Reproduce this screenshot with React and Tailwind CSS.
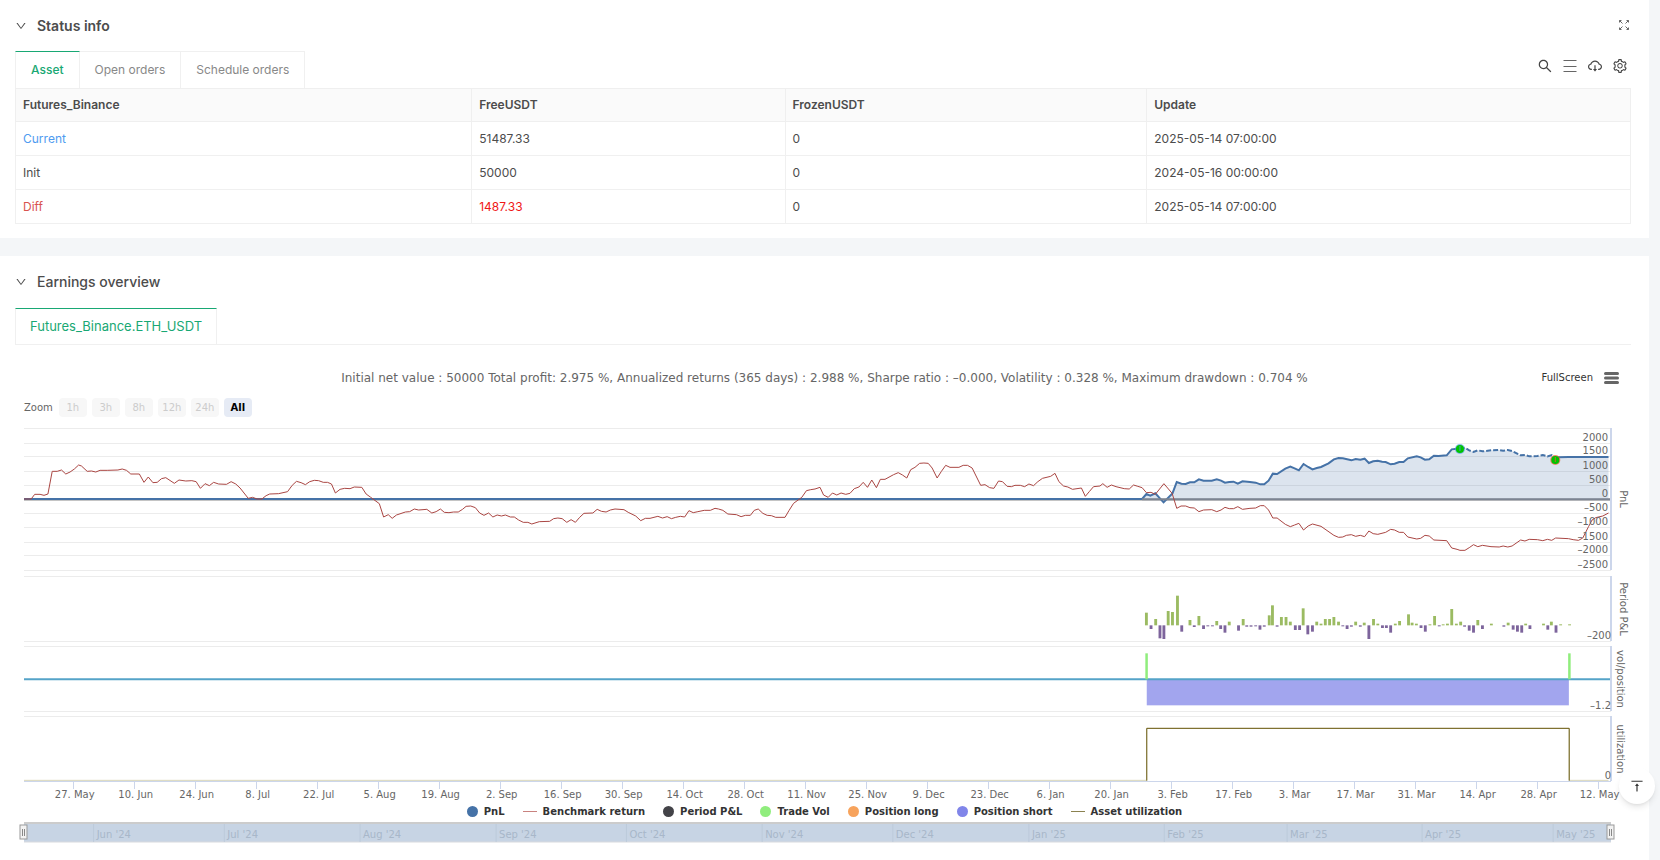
import { useState } from 'react';
import { AiOutlineCloudDownload, AiOutlineDown, AiOutlineSearch, AiOutlineSetting, AiOutlineVerticalAlignTop } from 'react-icons/ai';

// Plot units: the time axis is 4444 units wide, 3 units make one vertical pixel
const PLOT_LEFT = 67;
const PLOT_TOP = 30;
const PLOT_WIDTH = 4444;
const PLOT_HEIGHT = 1140;

const xPct = (v) => `${((v - PLOT_LEFT) / PLOT_WIDTH) * 100}%`;
const yPx = (v) => Math.round((v - PLOT_TOP) / 3);

const shift = (points, dx) => points.trim().split(/\s+/).map((p) => {
    const [x, y] = p.split(',').map(Number);
    return `${x + dx},${y}`;
}).join(' ');

const benchmark = [
    shift(`67,267 87,267 97,253 112,253 123,256 134,252 146,184 160,184 172,180 184,192 196,186 208,177 220,165 228,168 244,184 256,183 268,186 280,181
    300,181 330,180 342,177 354,181 366,192 390,192 403,217 415,201 428,218 440,217 452,206 464,203 488,220 501,210 520,213 537,212 549,215 561,235
    574,221 586,227 598,217 612,222 634,223 647,215 660,222 672,234 695,265 707,262 720,267 733,267 745,257 755,252 780,251 805,245 818,226 830,214
    843,218 855,224 867,215 880,211 892,212 905,217 917,217 928,222 939,249 952,238 965,235 980,236 992,231 1013,232 1025,252 1038,262 1062,281
    1074,321 1087,314 1098,325 1110,315 1135,306 1147,305 1160,297 1172,300 1195,298 1209,309 1221,305 1233,297 1244,307 1257,308 1270,306 1283,306
    1295,298 1305,289 1318,288 1331,293 1343,309 1355,316 1368,309 1380,321 1392,315 1404,318 1415,315 1429,321 1440,321 1452,330 1465,337 1478,337
    1489,342 1510,335`, 0),
    shift(`27,334 38,326 50,324 62,326 75,337 87,329 99,337 111,322 123,310 148,309 160,298 172,304 185,306 197,300 210,297 235,299 247,307 268,318
    282,332 295,325 308,325 330,319 343,324 356,320 368,326 380,322 393,319 405,321 417,302 429,308 442,305 460,301 477,301 490,295 500,297 512,301
    526,312 550,314 563,320 575,316 589,316 600,301 611,297 624,310 636,316 648,317 660,322 686,322 697,302 710,280 733,262 746,242 758,239 770,237
    784,232 794,255 807,262 819,249 831,255 843,249 856,253 868,250 880,236 893,231 905,217 917,232 929,210 942,233 953,208 966,208 990,194 1003,188
    1015,195 1027,204 1038,179 1050,172 1063,160 1075,159 1087,160 1098,174 1112,204 1124,184 1136,166 1148,172 1173,172 1185,166 1197,166 1210,174
    1234,226 1246,224 1259,233 1271,235 1284,213 1295,215 1308,229 1320,230 1330,226 1345,226 1357,230 1369,222 1382,227 1394,215 1407,205 1430,199
    1442,190 1453,215 1466,228 1478,231 1491,238 1516,234 1527,259 1538,245 1550,230`, 1512),
    shift(`0,228 8,221 20,232 32,225 45,230 68,236 82,237 94,225 106,229 118,233 130,248 143,247 155,253 179,221 202,250 215,295 227,288 240,288
    252,293 264,294 277,305 290,300 313,299 327,305 339,300 350,292 362,296 374,296 386,290 399,298 420,295 436,294 449,287 460,287 472,300 484,324
    496,324 519,343 533,350 545,345 557,340 570,360 583,348 595,342 619,349 655,376 668,382 680,381 690,376 704,374 716,379 729,376 741,380 753,363
    765,371 778,373 800,367 814,358 825,360 838,367 850,367 862,381 887,387 898,385 910,376 922,378 935,390 971,392 985,414 1000,418 1008,421
    1022,421 1034,413 1046,404 1058,410 1071,406 1095,410 1118,411 1129,408 1142,411 1154,408 1178,390 1190,393 1202,388 1225,389 1240,392 1253,388
    1265,391 1276,384 1312,386 1325,389 1340,391 1352,384 1368,350 1378,330 1388,323 1408,318 1424,309`, 3080),
].join(' ');

const pnlRise = '67,267 ' + shift(`118,267 130,252 141,257 155,250 166,263 178,277 203,250 215,216 228,221 240,222 252,217 264,217 277,208 290,212
    313,212 327,208 339,212 350,218 362,216 374,215 386,221 399,214 420,216 436,218 449,223 460,223 472,212 484,191 496,192 519,176 533,170 545,175
    557,181 570,162 583,171 595,178 607,174 619,171 640,160 655,148 668,144 680,145 704,151 716,147 729,149 741,146 753,159 765,154 778,152 790,155
    800,156 814,163 825,161 838,156 850,156 862,145 887,139 898,142 910,149 922,148 935,137 948,138 971,136 985,118 1000,116 1008,118`, 3080);
const pnlDrawdown = shift(`1008,118 1022,113 1034,121 1046,126 1058,121 1071,124 1095,121 1118,120 1129,122 1142,120 1154,123 1178,136 1190,135
    1202,139 1225,138 1240,135 1253,139 1265,135 1276,145`, 3080);
const pnlEnd = shift('1276,145 1283,142 1312,141 1424,141', 3080);

const periodBars = [
    [130, 38], [143, -11], [156, 19], [168, -39], [179, -41], [191, 43], [203, 40], [217, 89], [229, -19], [252, 16], [264, -5], [277, 28],
    [290, -11], [302, -3], [315, -3], [327, 13], [338, -11], [350, -22], [362, 11], [388, -16], [401, 19], [411, -4], [423, -4], [436, -3],
    [448, -13], [460, -4], [474, 30], [483, 60], [496, -4], [508, 25], [521, 25], [533, 11], [547, -14], [559, -14], [569, 51], [582, -27],
    [595, -19], [607, 11], [619, 5], [631, 19], [643, 19], [655, 25], [668, 11], [680, -3], [692, -11], [704, -4], [716, 11], [729, -4],
    [740, 8], [753, -41], [766, 19], [778, 5], [791, -8], [802, -8], [814, -22], [827, 5], [839, 13], [864, 33], [874, 8], [886, 5],
    [899, -8], [911, -19], [924, 3], [937, 28], [950, -3], [961, 3], [973, 5], [985, 49], [998, 5], [1010, 11], [1021, -4], [1034, -16],
    [1046, -22], [1058, 16], [1071, -11], [1096, 5], [1131, -4], [1143, 8], [1157, -13], [1169, -19], [1181, -22], [1192, 5], [1204, -11],
    [1242, 5], [1254, -13], [1264, 11], [1277, -22], [1290, 3], [1315, 3],
];

const pnlTicks = [
    ['2000', 100], ['1500', 139], ['1000', 183], ['500', 226], ['0', 268],
    ['–500', 310], ['–1000', 352], ['–1500', 396], ['–2000', 436], ['–2500', 480],
];

const panels = [
    { title: 'PnL', top: 53, bottom: 480, titleX: 9 },
    { title: 'Period P&L', top: 499, bottom: 693, titleX: 9, tick: '–200' },
    { title: 'vol/position', top: 708, bottom: 904, titleX: 6, tick: '–1.2' },
    { title: 'utilization', top: 918, bottom: 1114, titleX: 6, tick: '0' },
];

const dates = [
    '27. May', '10. Jun', '24. Jun', '8. Jul', '22. Jul', '5. Aug', '19. Aug', '2. Sep', '16. Sep', '30. Sep', '14. Oct', '28. Oct', '11. Nov',
    '25. Nov', '9. Dec', '23. Dec', '6. Jan', '20. Jan', '3. Feb', '17. Feb', '3. Mar', '17. Mar', '31. Mar', '14. Apr', '28. Apr', '12. May',
];

const months = [
    ["Jun '24", 262], ["Jul '24", 628], ["Aug '24", 1008], ["Sep '24", 1389], ["Oct '24", 1754], ["Nov '24", 2134],
    ["Dec '24", 2500], ["Jan '25", 2881], ["Feb '25", 3260], ["Mar '25", 3604], ["Apr '25", 3982], ["May '25", 4349],
];

const legend = [
    { name: 'PnL', color: '#4572a7' },
    { name: 'Benchmark return', color: '#c9827f', line: true },
    { name: 'Period P&L', color: '#434348' },
    { name: 'Trade Vol', color: '#90ed7d' },
    { name: 'Position long', color: '#f7a35c' },
    { name: 'Position short', color: '#8085e9' },
    { name: 'Asset utilization', color: '#8b8250', line: true },
];

const assets = [
    { name: 'Current', free: '51487.33', frozen: '0', update: '2025-05-14 07:00:00', nameClass: 'text-[#4f9bf0]', freeClass: '' },
    { name: 'Init', free: '50000', frozen: '0', update: '2024-05-16 00:00:00', nameClass: '', freeClass: '' },
    { name: 'Diff', free: '1487.33', frozen: '0', update: '2025-05-14 07:00:00', nameClass: 'text-[#d9544f]', freeClass: 'text-[#f01818]' },
];

const SectionTitle = ({ children, className }) => (
    <button className={`flex items-center gap-[10px] text-sm text-[#4c4c4c] ${className}`}>
        <AiOutlineDown className="w-3 h-3" />
        {children}
    </button>
);

const StatusInfo = () => {
    const [tab, setTab] = useState('Asset');

    return (
        <section className="bg-white pl-[15px] pr-[18px] pt-4 pb-[14px]">
            <div className="flex justify-between items-center h-[19px] mb-4">
                <SectionTitle className="font-semibold">Status info</SectionTitle>
                <button aria-label="Expand" className="mr-[2px] pb-[2px]">
                    <svg className="block" width="10" height="10" viewBox="0 0 10 10" fill="none" stroke="#666">
                        <path d="M.5 2.500V.5H2.500M.5 .5L3.500 3.500M7.500 .5H9.500V2.500M9.500 .5L6.500 3.500M.5 7.500V9.500H2.500M.5 9.500L3.500 6.500M7.500 9.500H9.500V7.500M9.500 9.500L6.500 6.500" />
                    </svg>
                </button>
            </div>
            <div className="flex justify-between items-end">
                <div role="tablist" className="flex">
                    {['Asset', 'Open orders', 'Schedule orders'].map((name) => (
                        <button
                            key={name}
                            role="tab"
                            aria-selected={tab === name}
                            onClick={() => setTab(name)}
                            className={`h-[37px] px-[15px] border-t border-r first:border-l border-r-[#f0f0f0] border-l-[#f0f0f0] text-xs ${tab === name ? 'border-t-[#18a874] text-[#18a874] font-medium' : 'border-t-[#f0f0f0] text-[#888]'}`}
                        >
                            {name}
                        </button>
                    ))}
                </div>
                <div className="flex items-center gap-[9px] h-[37px] pb-2 mr-[3px] text-[#444]">
                    <button aria-label="Search"><AiOutlineSearch className="block w-4 h-4" /></button>
                    <button aria-label="Columns">
                        <svg className="block" width="16" height="16" viewBox="0 0 16 16" stroke="#666"><path d="M1.500 2.500H14.500M1.500 8.500H14.500M1.500 13.500H14.500" /></svg>
                    </button>
                    <button aria-label="Download"><AiOutlineCloudDownload className="block w-4 h-4" /></button>
                    <button aria-label="Settings"><AiOutlineSetting className="block w-4 h-4" /></button>
                </div>
            </div>
            <table className="w-full table-fixed border-collapse text-left text-xs text-[#4c4c4c]">
                <colgroup>
                    <col className="w-[28.25%]" />
                    <col className="w-[19.4%]" />
                    <col className="w-[22.4%]" />
                    <col />
                </colgroup>
                <thead>
                    <tr className="h-[33px] bg-[#fafafa]">
                        {['Futures_Binance', 'FreeUSDT', 'FrozenUSDT', 'Update'].map((h) => (
                            <th key={h} className="border border-[#efefef] px-[7px] font-semibold">{h}</th>
                        ))}
                    </tr>
                </thead>
                <tbody>
                    {assets.map((row) => (
                        <tr key={row.name} className="h-[34px]">
                            <td className={`border border-[#f0f0f0] px-[7px] ${row.nameClass}`}>{row.name}</td>
                            <td className={`border border-[#f0f0f0] px-[7px] ${row.freeClass}`}>{row.free}</td>
                            <td className="border border-[#f0f0f0] px-[7px]">{row.frozen}</td>
                            <td className="border border-[#f0f0f0] px-[7px]">{row.update}</td>
                        </tr>
                    ))}
                </tbody>
            </table>
        </section>
    );
};

const Chart = () => (
    <svg className="block w-full h-[386px] overflow-visible text-[10px] font-['DejaVu_Sans',sans-serif]" fill="#666" role="img" aria-label="Earnings chart">
        <g shapeRendering="crispEdges" strokeWidth="1">
            {[53, ...pnlTicks.map((t) => t[1]), 499, 693, 708, 904, 918].map((y) => (
                <line key={y} x1="0" x2="100%" y1={yPx(y)} y2={yPx(y)} stroke="#ececec" />
            ))}
            {dates.map((d, i) => (
                <line key={d} x1={xPct(207 + i * 170.8)} x2={xPct(207 + i * 170.8)} y1={yPx(1114)} y2={yPx(1114) + 8} stroke="#ccd6eb" />
            ))}
        </g>

        <svg width="100%" height="380" viewBox={`${PLOT_LEFT} ${PLOT_TOP} ${PLOT_WIDTH} ${PLOT_HEIGHT}`} preserveAspectRatio="none" fill="none">
            <line x1="67" x2="4511" y1="269" y2="269" stroke="#b0b0b0" strokeWidth="2" vectorEffect="non-scaling-stroke" />
            <polygon points={`${pnlRise} ${pnlDrawdown} ${pnlEnd} 4504,267`} fill="#4572a7" fillOpacity="0.19" />
            <polyline points={pnlRise} stroke="#4572a7" strokeWidth="2" vectorEffect="non-scaling-stroke" />
            <polyline points={pnlDrawdown} stroke="#4572a7" strokeWidth="2" strokeDasharray="5 2" vectorEffect="non-scaling-stroke" />
            <polyline points={pnlEnd} stroke="#4572a7" strokeWidth="2" vectorEffect="non-scaling-stroke" />
            <line x1="3198" x2="4511" y1="268" y2="268" stroke="#7c8492" strokeWidth="2" vectorEffect="non-scaling-stroke" />
            <polyline points={benchmark} stroke="#aa4643" strokeWidth="1" vectorEffect="non-scaling-stroke" />

            {periodBars.map(([x, h]) => (
                <rect key={x} x={3080 + x - 4} y={h > 0 ? 646 - h : 646} width="8" height={Math.abs(h)} fill={h > 0 ? '#9bbb62' : '#7d649c'} />
            ))}

            <rect x="3211" y="809" width="1182" height="77" fill="#a2a5ee" />
            <line x1="67" x2="4511" y1="808" y2="808" stroke="#55a3c8" strokeWidth="2" vectorEffect="non-scaling-stroke" />
            <rect x="3207" y="730" width="7" height="78" fill="#90ed7d" />
            <rect x="4391" y="730" width="7" height="78" fill="#90ed7d" />

            <path d="M67 1111H3211V955H4394V1111H4504" stroke="#d8d5b8" strokeWidth="1" vectorEffect="non-scaling-stroke" />
            <path d="M3211 1112V955H4394V1112" stroke="#6b5c14" strokeWidth="1" vectorEffect="non-scaling-stroke" />
        </svg>

        <line x1="0" x2="100%" y1={yPx(1114)} y2={yPx(1114)} stroke="#ccd6eb" shapeRendering="crispEdges" />

        {[[4088, 118, '#4f9fe0'], [4355, 150, '#f0592a']].map(([x, y, ring]) => (
            <g key={x}>
                <circle cx={xPct(x)} cy={yPx(y)} r="5" fill={ring} fillOpacity="0.7" />
                <circle cx={xPct(x)} cy={yPx(y)} r="4" fill="#00c400" />
                <line x1={xPct(x)} x2={xPct(x)} y1={yPx(y) - 3} y2={yPx(y) + 2} stroke={ring} strokeOpacity="0.8" />
            </g>
        ))}

        {pnlTicks.map(([label, y]) => (
            <text key={label} x="100%" dx="-3" y={yPx(y) - 2} textAnchor="end">{label}</text>
        ))}
        {panels.map((p) => (
            <g key={p.title}>
                <line x1="100%" x2="100%" y1={yPx(p.top)} y2={yPx(p.bottom)} stroke="#ccd6eb" strokeWidth="2" />
                {p.tick && <text x="100%" y={yPx(p.bottom) - 2} textAnchor="end">{p.tick}</text>}
                <svg x="100%" y={yPx((p.top + p.bottom) / 2)} className="overflow-visible">
                    <text transform={`translate(${p.titleX} 0) rotate(90)`} textAnchor="middle">{p.title}</text>
                </svg>
            </g>
        ))}
        {dates.map((d, i) => (
            <text key={d} x={xPct(209 + i * 170.8)} y="378" textAnchor="middle">{d}</text>
        ))}
    </svg>
);

const Handle = ({ x }) => (
    <svg x={x} className="overflow-visible">
        <rect x="-4" y="2" width="7" height="14" fill="#f2f2f2" stroke="#999" />
        <path d="M-1.500 6V13M.5 6V13" stroke="#888" />
    </svg>
);

const Navigator = () => (
    <svg className="block w-full h-5 overflow-visible text-[10px] font-['DejaVu_Sans',sans-serif]" role="img" aria-label="Range navigator">
        <rect width="100%" height="19" fill="#c7d4e4" />
        <line x2="100%" y1="0" y2="0" stroke="#ccc" strokeWidth="2" />
        <line x2="100%" y1="19" y2="19" stroke="#d8dade" strokeWidth="1" />
        {months.map(([m, x]) => (
            <g key={m}>
                <line x1={xPct(x)} x2={xPct(x)} y1="1" y2="19" stroke="#bccada" />
                <text x={xPct(x)} dx="3" y="15" fill="#a8b7c9">{m}</text>
            </g>
        ))}
        <Handle x="0" />
        <Handle x="100%" />
    </svg>
);

const EarningsOverview = () => {
    const [range, setRange] = useState('All');

    return (
        <section className="bg-white pt-4 pb-[18px]">
            <div className="pl-[15px] pr-[18px]">
                <SectionTitle className="h-[19px] mb-[17px] font-medium">Earnings overview</SectionTitle>
                <div role="tablist" className="flex border-b border-[#f0f0f0]">
                    <button role="tab" aria-selected="true" className="h-[36px] px-[14px] border-t border-x border-x-[#f0f0f0] border-t-[#18a874] text-[13px] text-[#18a874]">
                        Futures_Binance.ETH_USDT
                    </button>
                </div>
            </div>
            <div className="ml-6 mr-[38px] pt-[23px] font-['DejaVu_Sans',sans-serif]">
                <div className="relative flex justify-center h-[19px] items-center -mr-[14px]">
                    <h3 className="text-xs text-[#666]">
                        Initial net value : 50000 Total profit: 2.975 %, Annualized returns (365 days) : 2.988 %, Sharpe ratio : –0.000, Volatility : 0.328 %, Maximum drawdown : 0.704 %
                    </h3>
                    <div className="absolute right-[6px] flex items-center gap-[11px]">
                        <button className="text-[10px] text-[#333]">FullScreen</button>
                        <button aria-label="Chart menu">
                            <svg className="block" width="15" height="12" viewBox="0 0 15 12" stroke="#666" strokeWidth="3" strokeLinecap="round"><path d="M1.500 1.500H13.500M1.500 6H13.500M1.500 10.500H13.500" /></svg>
                        </button>
                    </div>
                </div>
                <div className="flex items-center gap-[5px] mt-[11px] mb-[3px] text-[10px] text-[#666]">
                    <span className="mr-px">Zoom</span>
                    {['1h', '3h', '8h', '12h', '24h', 'All'].map((r) => (
                        <button
                            key={r}
                            onClick={() => setRange(r)}
                            className={`w-7 h-[19px] rounded-sm ${range === r ? 'bg-[#e6ebf5] text-black font-bold' : 'bg-[#f7f7f7] text-[#ccc]'}`}
                        >
                            {r}
                        </button>
                    ))}
                </div>
                <Chart />
                <div className="flex justify-center gap-[18px] -mr-[14px] text-[10px] leading-[10px] font-bold text-[#333]">
                    {legend.map((item) => (
                        <button key={item.name} className="flex items-center gap-[6px]">
                            {item.line
                                ? <span className="w-[14px] h-px" style={{ backgroundColor: item.color }} />
                                : <span className="w-[11px] h-[11px] rounded-full" style={{ backgroundColor: item.color }} />}
                            {item.name}
                        </button>
                    ))}
                </div>
                <div className="mt-[6px]">
                    <Navigator />
                </div>
            </div>
        </section>
    );
};

const App = () => (
    <div className="relative min-h-screen bg-[#f4f6f8] pr-[11px] font-['Inter',sans-serif]">
        <StatusInfo />
        <div className="h-[18px]" />
        <EarningsOverview />
        <button aria-label="Back to top" className="fixed right-[5px] bottom-14 w-9 h-9 rounded-full bg-white shadow-md flex items-center justify-center text-[#333]">
            <AiOutlineVerticalAlignTop className="w-4 h-4" />
        </button>
    </div>
);

export default App;
